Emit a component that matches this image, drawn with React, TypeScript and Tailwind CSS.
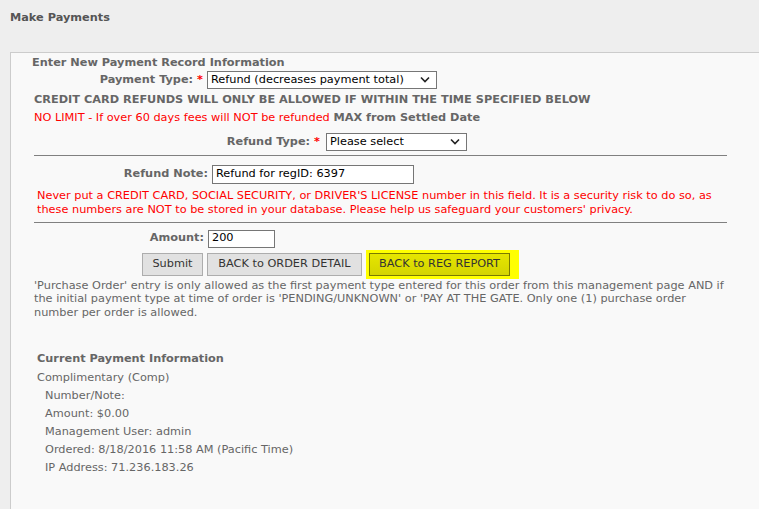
import React from 'react';

const font = { fontFamily: '"DejaVu Sans", Verdana, sans-serif' };

function Chevron() {
  return (
    <svg width="10" height="7" viewBox="0 0 10 7" className="shrink-0">
      <path d="M1 1.5 L5 5.5 L9 1.5" fill="none" stroke="#222" strokeWidth="1.6" />
    </svg>
  );
}

function Select({ value, width }: { value: string; width: string }) {
  return (
    <div className={`flex h-[18px] items-center justify-between border border-[#767676] bg-white pl-[3px] pr-[6px] text-[11.3px] text-black ${width}`}>
      <span className="whitespace-nowrap">{value}</span>
      <Chevron />
    </div>
  );
}

function Btn({ children, yellow, width }: { children: React.ReactNode; yellow?: boolean; width: string }) {
  return (
    <button
      type="button"
      className={
        yellow
          ? `h-[23px] border border-[#7a7a00] bg-gradient-to-b from-[#e6e600] to-[#d4d400] text-[11.3px] whitespace-nowrap text-[#333] ${width}`
          : `h-[23px] border border-[#adadad] bg-[#e1e1e1] text-[11.3px] whitespace-nowrap text-[#333] ${width}`
      }
    >
      {children}
    </button>
  );
}

export default function App() {
  return (
    <div style={font} className="h-[509px] w-[759px] overflow-hidden bg-[#eeeeee] text-[11.3px] text-[#666]">
      <div className="pl-[10px] pt-[10px] font-bold text-[#555]">Make Payments</div>

      <div className="ml-[10px] mt-[25px] h-[460px] border-l border-t border-[#cccccc] bg-[#f9f9f9] pl-[21px] pt-[2px]">
        <div className="font-bold leading-[16px] text-[#666]">Enter New Payment Record Information</div>

        <div className="flex items-center leading-[16px]">
          <div className="w-[171px] text-right font-bold">
            Payment Type: <span className="text-[#ff0000]">*</span>
          </div>
          <div className="ml-[4px]">
            <Select value="Refund (decreases payment total)" width="w-[230px]" />
          </div>
        </div>

        <div className="mt-[3px] pl-[2px] font-bold leading-[16px]">
          CREDIT CARD REFUNDS WILL ONLY BE ALLOWED IF WITHIN THE TIME SPECIFIED BELOW
        </div>
        <div className="mt-[2px] pl-[2px] leading-[16px]">
          <span className="text-[#ff0000]">NO LIMIT - If over 60 days fees will NOT be refunded</span>{' '}
          <span className="font-bold">MAX from Settled Date</span>
        </div>

        <div className="mt-[7px] flex items-center leading-[16px]">
          <div className="w-[288px] text-right font-bold">
            Refund Type: <span className="text-[#ff0000]">*</span>
          </div>
          <div className="ml-[6px]">
            <Select value="Please select" width="w-[141px]" />
          </div>
        </div>

        <div className="ml-[2px] mt-[4px] w-[693px] border-t border-[#808080]" />

        <div className="mt-[9px] flex items-center">
          <div className="w-[176px] text-right font-bold">Refund Note:</div>
          <div className="ml-[4px] flex h-[19px] w-[202px] items-center border border-[#767676] bg-white pl-[3px] text-black">
            Refund for regID: 6397
          </div>
        </div>

        <div className="mt-[5px] whitespace-nowrap pl-[5px] leading-[14px] text-[#ff0000]">
          Never put a CREDIT CARD, SOCIAL SECURITY, or DRIVER'S LICENSE number in this field. It is a security risk to do so, as
          <br />
          these numbers are NOT to be stored in your database. Please help us safeguard your customers' privacy.
        </div>

        <div className="ml-[2px] mt-[5px] w-[693px] border-t border-[#808080]" />

        <div className="mt-[7px] flex items-center">
          <div className="w-[172px] text-right font-bold">Amount:</div>
          <div className="ml-[4px] flex h-[18px] w-[67px] items-center border border-[#767676] bg-white pl-[3px] text-black">
            200
          </div>
        </div>

        <div className="mt-[2px] flex items-center">
          <div className="ml-[110px] mt-[1px]">
            <Btn width="w-[61px]">Submit</Btn>
          </div>
          <div className="ml-[4px] mt-[1px]">
            <Btn width="w-[155px]">BACK to ORDER DETAIL</Btn>
          </div>
          <div className="ml-[4px] bg-[#ffff00] py-[3px] pl-[3px] pr-[9px]">
            <Btn yellow width="w-[141px]">BACK to REG REPORT</Btn>
          </div>
        </div>

        <div className="mt-[0px] whitespace-nowrap pl-[2px] leading-[13.5px] text-[#666]">
          'Purchase Order' entry is only allowed as the first payment type entered for this order from this management page AND if
          <br />
          the initial payment type at time of order is 'PENDING/UNKNOWN' or 'PAY AT THE GATE. Only one (1) purchase order
          <br />
          number per order is allowed.
        </div>

        <div className="mt-[31px] pl-[5px] leading-[18px]">
          <div className="font-bold">Current Payment Information</div>
          <div className="mt-[1px]">Complimentary (Comp)</div>
          <div className="pl-[8px]">Number/Note:</div>
          <div className="pl-[8px]">Amount: $0.00</div>
          <div className="pl-[8px]">Management User: admin</div>
          <div className="pl-[8px]">Ordered: 8/18/2016 11:58 AM (Pacific Time)</div>
          <div className="pl-[8px]">IP Address: 71.236.183.26</div>
        </div>
      </div>
    </div>
  );
}
